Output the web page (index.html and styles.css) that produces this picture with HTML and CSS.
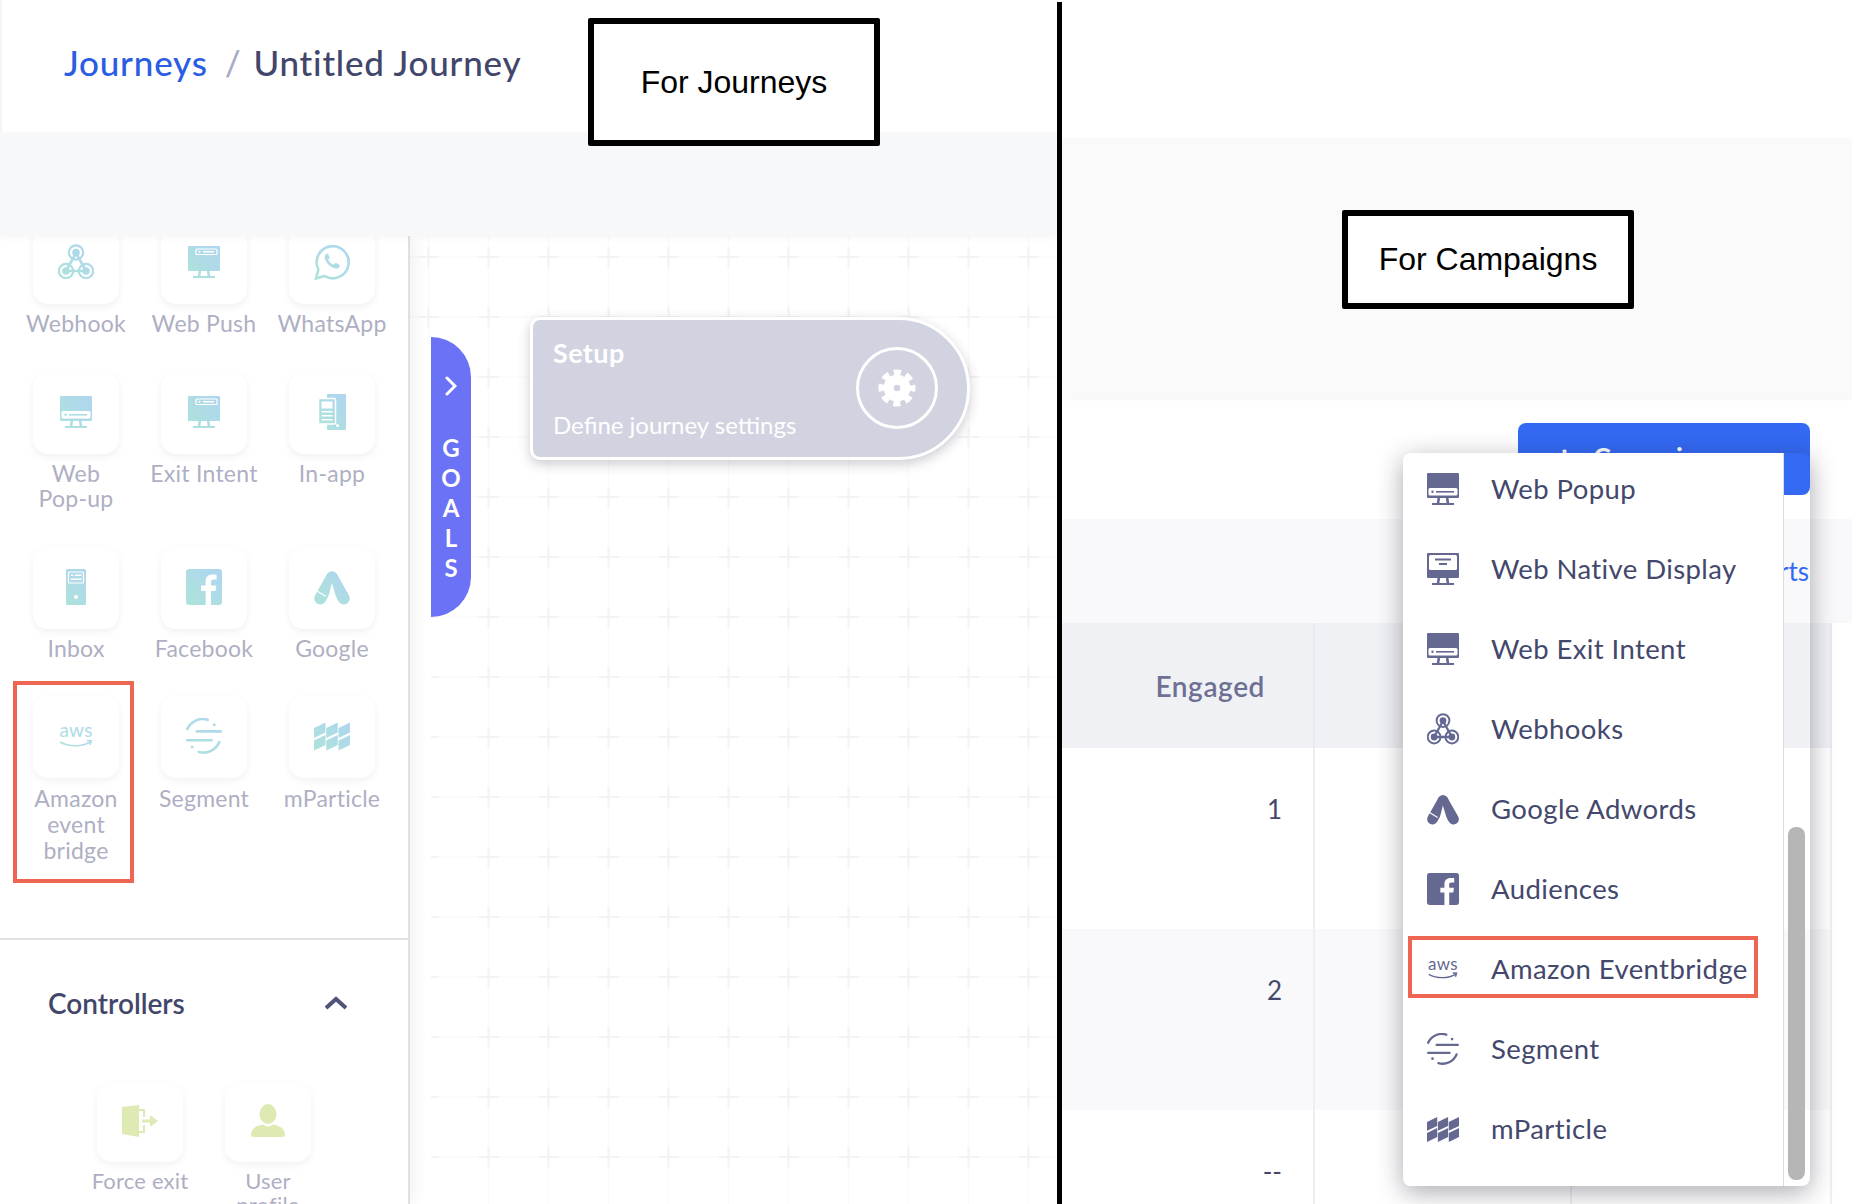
FILE: index.html
```html
<!DOCTYPE html>
<html lang="en">
<head>
    <meta charset="UTF-8">
    <title>Amazon Eventbridge channel</title>
    <link rel="stylesheet" href="styles.css">
</head>
<body>
    <!-- shared icons -->
    <svg class="icon-defs" width="0" height="0">
        <defs>
            <linearGradient id="fade" gradientUnits="userSpaceOnUse" x1="2" y1="34" x2="34" y2="2">
                <stop offset="0" stop-color="#ade3d9"/>
                <stop offset="1" stop-color="#afd5f1"/>
            </linearGradient>
            <symbol id="stand" viewBox="0 0 36 36">
                <path d="M12.500 27h2.600l-.7 5h7.200l-.7-5h2.600l.7 5h4.800v2H7v-2h4.800z"/>
            </symbol>
            <symbol id="i-push" viewBox="0 0 36 36">
                <rect x="2" y="2" width="32" height="25" rx="1"/>
                <use href="#stand"/>
                <rect class="cut" x="10" y="5" width="21" height="5.500" rx="1"/>
                <circle class="dot" cx="13.500" cy="7.750" r="1"/>
                <rect class="dot" x="17" y="7" width="11" height="1.500"/>
            </symbol>
            <symbol id="i-popup" viewBox="0 0 36 36">
                <rect x="2" y="2" width="32" height="25" rx="1"/>
                <use href="#stand"/>
                <rect class="paper" x="3.500" y="17" width="29" height="7.500" rx="1.500"/>
                <circle cx="7.500" cy="20.750" r="1.200"/>
                <rect x="11" y="20" width="18" height="1.600"/>
            </symbol>
            <symbol id="i-native" viewBox="0 0 36 36">
                <rect x="2" y="2" width="32" height="25" rx="1"/>
                <use href="#stand"/>
                <rect class="paper" x="4" y="4" width="28" height="15" rx="1.500"/>
                <rect x="10" y="7.500" width="16" height="2"/>
                <rect x="14" y="12" width="8" height="2"/>
            </symbol>
            <symbol id="i-webhook" viewBox="0 0 36 36">
                <path class="line link" d="M18 9l-10 18M18 9l10 18M8 27h20"/>
                <circle class="line ring" cx="18" cy="8.500" r="7.200"/>
                <circle class="line ring" cx="8" cy="27" r="7.200"/>
                <circle class="line ring" cx="28" cy="27" r="7.200"/>
                <circle cx="18" cy="8.500" r="3.800"/>
                <circle cx="8" cy="27" r="3.800"/>
                <circle cx="28" cy="27" r="3.800"/>
            </symbol>
            <symbol id="i-whatsapp" viewBox="0 0 36 36">
                <path class="line" d="M2 34.500l2.400-9A16 16 0 1 1 10.500 32z"/>
                <path d="M13 9.500c-2 1-3 3.200-1.800 6.300 1.500 3.600 4.800 7 8.600 8.300 2.800.9 4.900.2 5.900-1.900.3-.6.200-1.100-.4-1.400l-3.200-1.700c-.5-.2-1-.1-1.300.3l-1.100 1.400c-2.500-1-4.500-3-5.500-5.400l1.100-1c.4-.4.500-.8.300-1.300l-1.400-2.900c-.3-.6-.9-.8-1.600-.700z"/>
            </symbol>
            <symbol id="i-inapp" viewBox="0 0 36 36">
                <rect x="13" y="0" width="19" height="36" rx="1"/>
                <rect class="edge" x="4.500" y="4.500" width="17" height="25.500" rx="1"/>
                <rect class="paper" x="7.500" y="7.500" width="11" height="7"/>
                <rect class="paper" x="7.500" y="17" width="11" height="1.500"/>
                <rect class="paper" x="7.500" y="21" width="11" height="1.500"/>
                <rect class="paper" x="7.500" y="25" width="11" height="1.500"/>
                <circle class="paper" cx="23.500" cy="31.500" r="1.500"/>
            </symbol>
            <symbol id="i-inbox" viewBox="0 0 36 36">
                <rect x="8" y="0" width="20" height="36" rx="1.500"/>
                <rect class="cut" x="10.500" y="3" width="15" height="11" rx="1"/>
                <rect class="dot" x="13" y="5.500" width="2" height="1.500"/>
                <rect class="dot" x="16.500" y="5.500" width="7" height="1.500"/>
                <rect class="dot" x="13" y="9.500" width="10.500" height="1.500"/>
                <circle class="paper" cx="18" cy="28" r="2"/>
            </symbol>
            <symbol id="i-facebook" viewBox="0 0 36 36">
                <rect x="0" y="0" width="36" height="36" rx="3"/>
                <path class="paper" d="M25 36V22h4.600l.7-5.400H25v-3.400c0-1.600.4-2.600 2.700-2.600h2.900V5.800c-.5-.1-2.200-.2-4.100-.2-4.100 0-6.900 2.500-6.900 7.100v3.900H15V22h4.600v14z"/>
            </symbol>
            <symbol id="i-google" viewBox="0 0 36 36">
                <path class="line bar" d="M18 8.500L6.200 29.500"/>
                <path class="line bar" d="M18 8.500L29.800 29.500"/>
                <path class="paper" d="M17.800 14L24.500 36H12.500z"/>
                <path class="line sep" d="M0.500 20.500L12 27.500"/>
            </symbol>
            <symbol id="i-aws" viewBox="0 0 36 36">
                <text class="aws-text" x="18" y="19" text-anchor="middle">aws</text>
                <path class="line thin" d="M2 24c9 5 22 5 30.500-.3"/>
                <path class="line thin" d="M29 22.500l4.300.2-1.300 4"/>
            </symbol>
            <symbol id="i-segment" viewBox="0 0 36 36">
                <path class="line seg" d="M1.300 11A17 17 0 0 1 21.700 1.800"/>
                <path class="line seg" d="M10.800 13.400H34.700"/>
                <path class="line seg" d="M1.300 22.300H25.500"/>
                <path class="line seg" d="M33.300 24A17 17 0 0 1 12.800 33.900"/>
                <circle cx="28.200" cy="6.800" r="1.500"/>
                <circle cx="6.200" cy="28.900" r="1.500"/>
            </symbol>
            <symbol id="i-mparticle" viewBox="0 0 36 36">
                <path d="M0 10l11.500-5.500v10L0 20zM12.250 10l11.500-5.500v10L12.250 20zM24.500 10L36 4.500v10L24.500 20z"/>
                <path d="M0 22.500L11.500 17v10L0 32.500zM12.250 22.500L23.750 17v10L12.250 32.500zM24.500 22.500L36 17v10L24.500 32.500z"/>
            </symbol>
            <symbol id="i-exit" viewBox="0 0 36 36">
                <path d="M0 4l17-2v32l-17-3z"/>
                <path d="M17 6h6v8h-2V8h-4zM17 30h6v-8h-2v6h-4z"/>
                <path d="M20 16.500h8V12l8 6-8 6v-4.500h-8z"/>
            </symbol>
            <symbol id="i-user" viewBox="0 0 36 36">
                <ellipse cx="18" cy="11" rx="8.500" ry="10"/>
                <path d="M1 32c0-5 3-8 8-9.500l4-1c3 2.500 7 2.500 10 0l4 1c5 1.500 8 4.500 8 9.500 0 1-1 2-2 2H3c-1 0-2-1-2-2z"/>
            </symbol>
        </defs>
    </svg>

    <div class="screens">
        <!-- journeys screenshot -->
        <section class="pane journeys">
            <header class="crumbs">
                <a class="crumb-link">Journeys</a>
                <span class="crumb-sep">/</span>
                <span class="crumb-here">Untitled Journey</span>
            </header>
            <div class="band"></div>
            <div class="builder">
                <aside class="sidebar">
                    <div class="palette">
                        <div class="tile"><div class="tile-card"><svg class="icon fade"><use href="#i-webhook"/></svg></div><span>Webhook</span></div>
                        <div class="tile"><div class="tile-card"><svg class="icon fade"><use href="#i-push"/></svg></div><span>Web Push</span></div>
                        <div class="tile"><div class="tile-card"><svg class="icon fade"><use href="#i-whatsapp"/></svg></div><span>WhatsApp</span></div>

                        <div class="tile"><div class="tile-card"><svg class="icon fade"><use href="#i-popup"/></svg></div><span>Web<br>Pop-up</span></div>
                        <div class="tile"><div class="tile-card"><svg class="icon fade"><use href="#i-push"/></svg></div><span>Exit Intent</span></div>
                        <div class="tile"><div class="tile-card"><svg class="icon fade"><use href="#i-inapp"/></svg></div><span>In-app</span></div>

                        <div class="tile"><div class="tile-card"><svg class="icon fade"><use href="#i-inbox"/></svg></div><span>Inbox</span></div>
                        <div class="tile"><div class="tile-card"><svg class="icon fade"><use href="#i-facebook"/></svg></div><span>Facebook</span></div>
                        <div class="tile"><div class="tile-card"><svg class="icon fade"><use href="#i-google"/></svg></div><span>Google</span></div>

                        <div class="tile tall"><div class="tile-card"><svg class="icon fade"><use href="#i-aws"/></svg></div><span>Amazon<br>event<br>bridge</span><div class="mark mark-tile"></div></div>
                        <div class="tile tall"><div class="tile-card"><svg class="icon fade"><use href="#i-segment"/></svg></div><span>Segment</span></div>
                        <div class="tile tall"><div class="tile-card"><svg class="icon fade"><use href="#i-mparticle"/></svg></div><span>mParticle</span></div>
                    </div>
                    <div class="controllers">
                        <div class="controllers-head">
                            <h3>Controllers</h3>
                            <svg class="chevron-up" viewBox="0 0 24 14"><path d="M2 12L12 3l10 9"/></svg>
                        </div>
                        <div class="controllers-row">
                            <div class="tile small"><div class="tile-card"><svg class="icon lime"><use href="#i-exit"/></svg></div><span>Force exit</span></div>
                            <div class="tile small"><div class="tile-card"><svg class="icon lime"><use href="#i-user"/></svg></div><span>User<br>profile</span></div>
                        </div>
                    </div>
                </aside>
                <div class="canvas">
                    <svg class="canvas-grid" width="100%" height="100%">
                        <defs>
                            <pattern id="cross" width="60" height="60" patternUnits="userSpaceOnUse">
                                <path class="grid-line" d="M18.500 0v60M0 21h60"/>
                                <path class="grid-plus" d="M18.500 11v20M8.500 21h20"/>
                            </pattern>
                        </defs>
                        <rect width="100%" height="100%" fill="url(#cross)"/>
                    </svg>
                    <div class="goals-rail"></div>
                    <div class="goals-tab">
                        <svg class="chevron-right" viewBox="0 0 12 20"><path d="M2 2l8 8-8 8"/></svg>
                        <div class="goals-word"><span>G</span><span>O</span><span>A</span><span>L</span><span>S</span></div>
                    </div>
                    <div class="setup-node">
                        <div class="setup-text">
                            <div class="setup-title">Setup</div>
                            <div class="setup-sub">Define journey settings</div>
                        </div>
                        <div class="setup-ring">
                            <svg class="gear" viewBox="0 0 40 40">
                                <circle class="gear-body" cx="20" cy="20" r="14"/>
                                <circle class="gear-teeth" cx="20" cy="20" r="16.500"/>
                                <circle class="gear-hole" cx="20" cy="20" r="3.500"/>
                            </svg>
                        </div>
                    </div>
                </div>
            </div>
            <div class="note note-journeys">For Journeys</div>
        </section>

        <div class="split"></div>

        <!-- campaigns screenshot -->
        <section class="pane campaigns">
            <div class="top-gap"></div>
            <div class="top-band"></div>
            <div class="toolbar"><button class="add-btn"><span class="add-plus">+</span>Campaign</button></div>
            <div class="filters"><a class="filters-link">Charts</a></div>
            <div class="table">
                <div class="thead">
                    <div class="th">Engaged</div>
                    <div class="th"></div>
                    <div class="th"></div>
                </div>
                <div class="tr">
                    <div class="td">1</div><div class="td"></div><div class="td"></div>
                </div>
                <div class="tr even">
                    <div class="td">2</div><div class="td"></div><div class="td"></div>
                </div>
                <div class="tr">
                    <div class="td">--</div><div class="td"></div><div class="td"></div>
                </div>
            </div>

            <div class="channel-menu">
                <ul class="channel-list">
                    <li><svg class="icon mono"><use href="#i-popup"/></svg>Web Popup</li>
                    <li><svg class="icon mono"><use href="#i-native"/></svg>Web Native Display</li>
                    <li><svg class="icon mono"><use href="#i-popup"/></svg>Web Exit Intent</li>
                    <li><svg class="icon"><use href="#i-webhook"/></svg>Webhooks</li>
                    <li><svg class="icon"><use href="#i-google"/></svg>Google Adwords</li>
                    <li><svg class="icon"><use href="#i-facebook"/></svg>Audiences</li>
                    <li><svg class="icon"><use href="#i-aws"/></svg>Amazon Eventbridge<div class="mark mark-row"></div></li>
                    <li><svg class="icon"><use href="#i-segment"/></svg>Segment</li>
                    <li><svg class="icon"><use href="#i-mparticle"/></svg>mParticle</li>
                </ul>
                <div class="menu-track"><div class="menu-thumb"></div></div>
            </div>
            <div class="note note-campaigns">For Campaigns</div>
        </section>
    </div>
</body>
</html>
```

FILE: styles.css
```css
* {
    box-sizing: border-box;
}
html, body {
    margin: 0;
    height: 1204px;
    overflow: hidden;
    background: #fff;
}
body {
    font-family: Lato, "Open Sans", sans-serif;
    color: #44486c;
}
.icon-defs {
    position: absolute;
}
.screens {
    display: flex;
    height: 1204px;
}
.pane {
    position: relative;
    display: flex;
    flex-direction: column;
    height: 1204px;
    overflow: hidden;
}
.journeys {
    width: 1057px;
    box-shadow: inset 3px 0 3px -2px rgba(0,0,0,0.08);
}
.split {
    width: 5px;
    margin-top: 2px;
    background: #000;
}
.campaigns {
    flex: 1;
}

/* icons */
.icon {
    --ink: #656992;
    width: 36px;
    height: 36px;
    flex: none;
    fill: var(--ink);
}
.icon.fade {
    --ink: url(#fade);
}
.icon.lime {
    --ink: #deeab3;
}
.line {
    fill: none;
    stroke: var(--ink);
    stroke-width: 2.6;
}
.line.thin {
    stroke-width: 1.6;
}
.line.ring {
    stroke-width: 2.2;
}
.line.link {
    stroke-width: 2.6;
}
.line.bar {
    stroke-width: 12;
    stroke-linecap: round;
}
.line.sep {
    stroke: #fff;
    stroke-width: 1.3;
}
.line.seg {
    stroke-width: 2.6;
    stroke-linecap: round;
}
.cut {
    fill: none;
    stroke: #fff;
    stroke-width: 1.2;
}
.dot, .paper {
    fill: #fff;
}
.edge {
    stroke: #fff;
    stroke-width: 1.5;
}
.aws-text {
    font-family: Lato, sans-serif;
    font-size: 19px;
}

/* annotations */
.note {
    position: absolute;
    z-index: 5;
    display: flex;
    align-items: center;
    justify-content: center;
    background: #fff;
    border: 6px solid #000;
    border-radius: 2px;
    color: #000;
    font-family: "Liberation Sans", Arial, sans-serif;
    font-size: 32px;
}
.note-journeys {
    left: 588px;
    top: 18px;
    width: 292px;
    height: 128px;
}
.note-campaigns {
    left: 280px;
    top: 210px;
    width: 292px;
    height: 99px;
}
.mark {
    position: absolute;
    border: 4px solid #ee6554;
}
.mark-tile {
    left: 1px;
    top: -15px;
    width: 121px;
    height: 202px;
}
.mark-row {
    left: 5px;
    top: 7px;
    width: 350px;
    height: 62px;
}

/* journeys */
.crumbs {
    display: flex;
    align-items: center;
    height: 132px;
    padding: 0 0 8px 64px;
    font-size: 35px;
    font-weight: 500;
    letter-spacing: 0.8px;
    flex: none;
}
.crumb-link {
    color: #2b5de2;
}
.crumb-sep {
    margin: 0 12px 0 17px;
    color: #a9abc4;
}
.crumb-here {
    color: #42466a;
}
.band {
    position: relative;
    z-index: 2;
    flex: none;
    height: 104px;
    background: #f7f8fa;
    box-shadow: 0 2px 6px rgba(0,0,0,0.04);
}
.builder {
    flex: 1;
    display: flex;
    min-height: 0;
}
.sidebar {
    position: relative;
    z-index: 1;
    width: 410px;
    flex: none;
    overflow: hidden;
    background: #fff;
    border-right: 2px solid #e0e0e2;
    box-shadow: 5px 0 14px rgba(0,0,0,0.05);
}
.palette {
    display: grid;
    grid-template-columns: repeat(3, 128px);
    row-gap: 36px;
    margin-top: -14px;
    padding-left: 12px;
    height: 718px;
    align-content: start;
    border-bottom: 2px solid #e3e3e6;
}
.tile {
    position: relative;
    display: flex;
    flex-direction: column;
    align-items: center;
    text-align: center;
    font-size: 23px;
    line-height: 25px;
    letter-spacing: 0.25px;
    color: #aeafc3;
}
.tile.tall {
    line-height: 26px;
    top: -1px;
}
.tile-card {
    display: flex;
    align-items: center;
    justify-content: center;
    width: 86px;
    height: 82px;
    margin-bottom: 7px;
    padding-bottom: 3px;
    background: #fff;
    border-radius: 15px;
    box-shadow: 0 3px 7px rgba(60,60,90,0.07);
}
.controllers {
    padding-top: 47px;
}
.controllers-head {
    display: flex;
    align-items: center;
    justify-content: space-between;
    padding: 0 60px 0 48px;
    height: 32px;
}
.controllers-head h3 {
    margin: 0;
    font-size: 28px;
    font-weight: 600;
    color: #42466a;
}
.chevron-up {
    width: 24px;
    height: 14px;
    fill: none;
    stroke: #4f5378;
    stroke-width: 4;
}
.controllers-row {
    display: flex;
    margin-top: 64px;
    padding-left: 76px;
}
.tile.small {
    width: 128px;
    font-size: 22px;
    line-height: 24px;
    letter-spacing: 0.2px;
}
.tile.small .tile-card {
    height: 79px;
    margin-bottom: 7px;
}

/* canvas */
.canvas {
    position: relative;
    flex: 1;
    background: #fff;
}
.canvas-grid {
    display: block;
}
.grid-line {
    fill: none;
    stroke: #fafafb;
    stroke-width: 1.5;
}
.grid-plus {
    fill: none;
    stroke: #f3f3f5;
    stroke-width: 2;
}
.goals-rail {
    position: absolute;
    left: 0;
    top: 101px;
    bottom: 0;
    width: 21px;
    background: #fff;
}
.goals-tab {
    position: absolute;
    left: 21px;
    top: 101px;
    width: 40px;
    height: 280px;
    display: flex;
    flex-direction: column;
    align-items: center;
    padding-top: 39px;
    background: #6c72f6;
    border-radius: 0 40px 40px 0;
    color: #fff;
}
.chevron-right {
    width: 12px;
    height: 20px;
    fill: none;
    stroke: #fff;
    stroke-width: 3;
    stroke-linecap: round;
}
.goals-word {
    display: flex;
    flex-direction: column;
    align-items: center;
    margin-top: 37px;
    font-size: 24px;
    font-weight: 700;
    line-height: 30px;
}
.setup-node {
    position: absolute;
    left: 120px;
    top: 81px;
    width: 440px;
    height: 143px;
    display: flex;
    justify-content: space-between;
    padding: 19px 29px 18px 20px;
    background: #d1d3e0;
    border: 3px solid #fff;
    border-radius: 10px 72px 72px 10px;
    box-shadow: 0 4px 12px rgba(50,50,80,0.25);
    color: #fff;
}
.setup-text {
    display: flex;
    flex-direction: column;
    justify-content: space-between;
}
.setup-title {
    font-size: 27px;
    font-weight: 700;
    letter-spacing: 0.4px;
    line-height: 28px;
}
.setup-sub {
    font-size: 24px;
    line-height: 28px;
}
.setup-ring {
    display: flex;
    align-items: center;
    justify-content: center;
    width: 82px;
    height: 82px;
    margin: 8px 0 0;
    border: 3px solid #fff;
    border-radius: 50%;
}
.gear {
    width: 38px;
    height: 38px;
}
.gear-body {
    fill: #fff;
}
.gear-teeth {
    fill: none;
    stroke: #fff;
    stroke-width: 6;
    stroke-dasharray: 7.500 5.460;
    stroke-dashoffset: 3.750;
}
.gear-hole {
    fill: #d1d3e0;
}

/* campaigns */
.top-gap {
    flex: none;
    height: 138px;
}
.top-band {
    flex: none;
    height: 260px;
    background: #fafafb;
    box-shadow: 0 1px 3px rgba(0,0,0,0.05);
}
.toolbar {
    flex: none;
    height: 121px;
    display: flex;
    justify-content: flex-end;
    padding: 25px 42px 0 0;
}
.add-btn {
    display: flex;
    align-items: center;
    width: 292px;
    height: 72px;
    padding: 0 0 5px 36px;
    border: 0;
    border-radius: 8px;
    background: #3369f3;
    color: #fff;
    font-family: inherit;
    font-size: 27px;
    font-weight: 700;
}
.add-plus {
    margin-right: 18px;
    font-size: 36px;
}
.filters {
    flex: none;
    height: 104px;
    display: flex;
    align-items: center;
    justify-content: flex-end;
    padding-right: 43px;
    background: #f9f9fb;
    font-size: 26px;
}
.filters-link {
    color: #3369f3;
}
.table {
    width: 770px;
}
.thead, .tr {
    display: grid;
    grid-template-columns: 253px 257px 260px;
}
.thead {
    height: 125px;
    background: #f0f1f5;
}
.th {
    display: flex;
    align-items: center;
    justify-content: flex-end;
    padding: 0 48px 0 0;
    border-right: 2px solid #e9eaef;
    font-size: 28px;
    font-weight: 600;
    letter-spacing: 0.6px;
    color: #6d7093;
}
.tr {
    height: 181px;
}
.tr.even {
    background: #f9f9fb;
}
.td {
    padding: 45px 31px 0 0;
    border-right: 2px solid #eeeef3;
    text-align: right;
    font-size: 26px;
    line-height: 32px;
}

/* channel dropdown */
.channel-menu {
    position: absolute;
    left: 341px;
    top: 453px;
    width: 407px;
    height: 733px;
    display: flex;
    border-radius: 8px;
    box-shadow: 0 6px 26px rgba(30,30,50,0.38);
    overflow: hidden;
}
.channel-list {
    width: 381px;
    margin: 0;
    padding: 0;
    list-style: none;
    background: #fff;
    border-right: 1px solid #dcdcdc;
}
.channel-list li {
    position: relative;
    top: -4px;
    display: flex;
    align-items: center;
    gap: 32px;
    height: 80px;
    padding: 0 0 2px 24px;
    font-size: 27.500px;
    letter-spacing: 0.4px;
}
.channel-list .icon {
    width: 32px;
    height: 32px;
    margin-top: 2px;
}
.channel-list .icon.mono {
    width: 36px;
    height: 36px;
    margin: 2px -2px 0;
}
.menu-track {
    flex: 1;
    padding: 374px 5px 6px 4px;
}
.menu-thumb {
    height: 100%;
    background: #b6b6b6;
    border-radius: 8px;
}
```
